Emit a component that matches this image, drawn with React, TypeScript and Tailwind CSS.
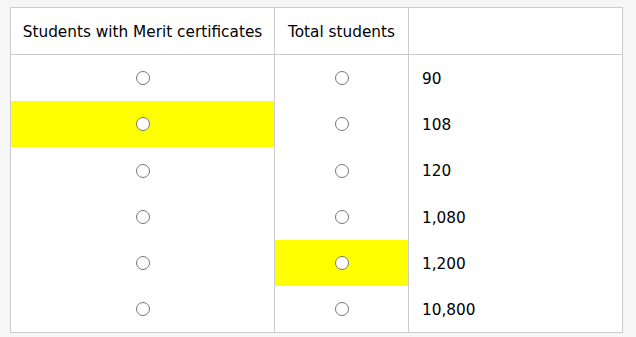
const rows = [
  { value: "90", pick: 0 },
  { value: "108", pick: 1 },
  { value: "120", pick: 0 },
  { value: "1,080", pick: 0 },
  { value: "1,200", pick: 2 },
  { value: "10,800", pick: 0 },
];

function Radio() {
  return <span className="inline-block h-[14px] w-[14px] rounded-full border border-[#767676] bg-white align-middle" />;
}

export default function App() {
  return (
    <div className="min-h-[337px] w-[636px] bg-[#f6f6f6] pl-[10px] pt-[7px]" style={{ fontFamily: "Tahoma, 'DejaVu Sans', sans-serif" }}>
      <table className="w-[613px] table-fixed border-collapse border border-[#cccccc] bg-white text-[15.3px] text-black">
        <colgroup>
          <col className="w-[264px]" />
          <col className="w-[134px]" />
          <col />
        </colgroup>
        <thead>
          <tr className="h-[47px] border-b border-[#cccccc]">
            <th className="border-r border-[#cccccc] px-1 pt-[3px] text-center font-normal">Students with Merit certificates</th>
            <th className="border-r border-[#cccccc] px-1 pt-[3px] text-center font-normal">Total students</th>
            <th />
          </tr>
        </thead>
        <tbody>
          {rows.map((r) => (
            <tr key={r.value} className="h-[46.3px]">
              <td className={`border-r border-[#cccccc] pt-[1px] text-center ${r.pick === 1 ? "bg-[#ffff00]" : ""}`}>
                <Radio />
              </td>
              <td className={`border-r border-[#cccccc] pt-[1px] text-center ${r.pick === 2 ? "bg-[#ffff00]" : ""}`}>
                <Radio />
              </td>
              <td className="pl-[13px] pt-[3px]">{r.value}</td>
            </tr>
          ))}
        </tbody>
      </table>
    </div>
  );
}
